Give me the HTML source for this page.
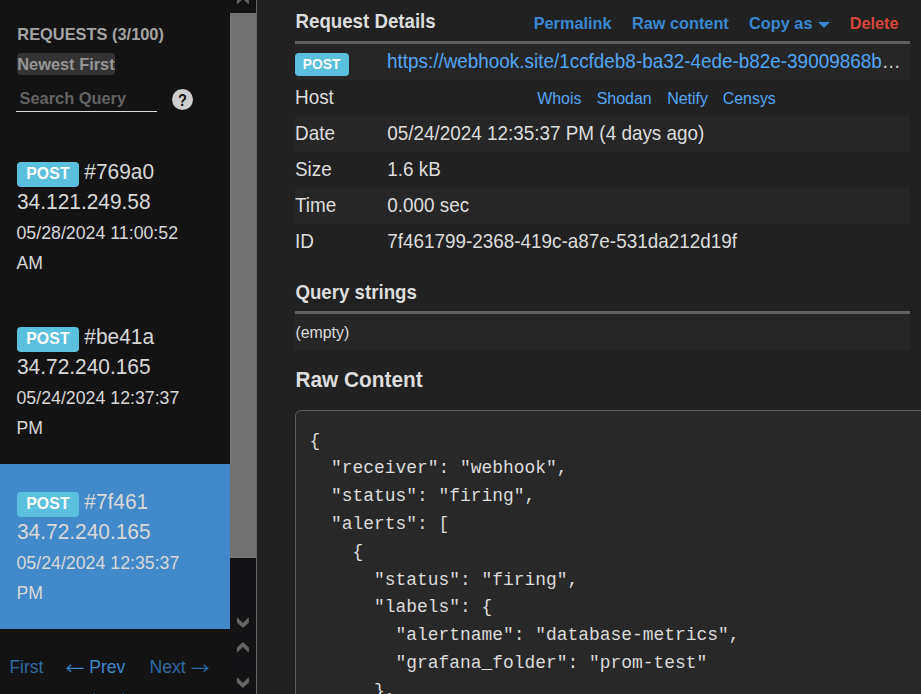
<!DOCTYPE html>
<html><head><meta charset="utf-8"><style>
html,body{margin:0;padding:0;width:921px;height:694px;overflow:hidden;background:#212121;}
.t{position:absolute;white-space:nowrap;font-family:"Liberation Sans", sans-serif;}
.r{position:absolute;}
</style></head><body>
<div class="r" style="left:0px;top:0px;width:230px;height:694px;background:#131313;"></div>
<div class="t" style="left:17.30px;top:25.21px;font-size:16.4px;line-height:16.4px;color:#a4a4a4;font-weight:bold;transform:scaleY(1.06);transform-origin:0 2.14px;">REQUESTS (3/100)</div>
<div class="r" style="left:17px;top:53px;width:98px;height:22px;background:#333333;border-radius:4px;"></div>
<div class="t" style="left:17.20px;top:54.81px;font-size:16.4px;line-height:16.4px;color:#959595;font-weight:bold;transform:scaleY(1.06);transform-origin:0 2.14px;">Newest First</div>
<div class="t" style="left:19.50px;top:88.81px;font-size:16.4px;line-height:16.4px;color:#636363;font-weight:bold;transform:scaleY(1.06);transform-origin:0 2.14px;">Search Query</div>
<div class="r" style="left:16px;top:110.7px;width:141px;height:1.4px;background:#dddddd;"></div>
<div class="r" style="left:171.7px;top:88.6px;width:21.4px;height:21.4px;background:#cdcdcd;border-radius:50%;"></div>
<div class="t" style="left:177.90px;top:92.54px;font-size:14.6px;line-height:14.6px;color:#111111;font-weight:bold;transform:scaleY(1.1);transform-origin:0 1.91px;">?</div>
<div class="r" style="left:17px;top:162px;width:62px;height:25px;background:#5bc0de;border-radius:4px;"></div>
<div class="t" style="left:26.20px;top:165.12px;font-size:15.8px;line-height:15.8px;color:#ffffff;font-weight:bold;transform:scaleY(1.06);transform-origin:0 2.07px;letter-spacing:0.15px;">POST</div>
<div class="t" style="left:84.30px;top:161.00px;font-size:20.9px;line-height:20.9px;color:#d8d8d8;font-weight:normal;transform:scaleY(1.06);transform-origin:0 2.73px;">#769a0</div>
<div class="t" style="left:17.00px;top:191.20px;font-size:20.9px;line-height:20.9px;color:#d8d8d8;font-weight:normal;transform:scaleY(1.06);transform-origin:0 2.73px;">34.121.249.58</div>
<div class="t" style="left:16.50px;top:224.47px;font-size:17.75px;line-height:17.75px;color:#d8d8d8;font-weight:normal;transform:scaleY(1.06);transform-origin:0 2.32px;">05/28/2024 11:00:52</div>
<div class="t" style="left:16.50px;top:254.20px;font-size:17.6px;line-height:17.6px;color:#d8d8d8;font-weight:normal;transform:scaleY(1.06);transform-origin:0 2.30px;">AM</div>
<div class="r" style="left:17px;top:327px;width:62px;height:25px;background:#5bc0de;border-radius:4px;"></div>
<div class="t" style="left:26.20px;top:330.12px;font-size:15.8px;line-height:15.8px;color:#ffffff;font-weight:bold;transform:scaleY(1.06);transform-origin:0 2.07px;letter-spacing:0.15px;">POST</div>
<div class="t" style="left:84.30px;top:326.00px;font-size:20.9px;line-height:20.9px;color:#d8d8d8;font-weight:normal;transform:scaleY(1.06);transform-origin:0 2.73px;">#be41a</div>
<div class="t" style="left:17.00px;top:356.20px;font-size:20.9px;line-height:20.9px;color:#d8d8d8;font-weight:normal;transform:scaleY(1.06);transform-origin:0 2.73px;">34.72.240.165</div>
<div class="t" style="left:16.50px;top:389.47px;font-size:17.75px;line-height:17.75px;color:#d8d8d8;font-weight:normal;transform:scaleY(1.06);transform-origin:0 2.32px;">05/24/2024 12:37:37</div>
<div class="t" style="left:16.50px;top:419.20px;font-size:17.6px;line-height:17.6px;color:#d8d8d8;font-weight:normal;transform:scaleY(1.06);transform-origin:0 2.30px;">PM</div>
<div class="r" style="left:0px;top:464px;width:230px;height:165px;background:#4189c8;"></div>
<div class="r" style="left:17px;top:492px;width:62px;height:25px;background:#5bc0de;border-radius:4px;"></div>
<div class="t" style="left:26.20px;top:495.12px;font-size:15.8px;line-height:15.8px;color:#ffffff;font-weight:bold;transform:scaleY(1.06);transform-origin:0 2.07px;letter-spacing:0.15px;">POST</div>
<div class="t" style="left:84.30px;top:491.00px;font-size:20.9px;line-height:20.9px;color:#d8d8d8;font-weight:normal;transform:scaleY(1.06);transform-origin:0 2.73px;">#7f461</div>
<div class="t" style="left:17.00px;top:521.20px;font-size:20.9px;line-height:20.9px;color:#d8d8d8;font-weight:normal;transform:scaleY(1.06);transform-origin:0 2.73px;">34.72.240.165</div>
<div class="t" style="left:16.50px;top:554.47px;font-size:17.75px;line-height:17.75px;color:#d8d8d8;font-weight:normal;transform:scaleY(1.06);transform-origin:0 2.32px;">05/24/2024 12:35:37</div>
<div class="t" style="left:16.50px;top:584.20px;font-size:17.6px;line-height:17.6px;color:#d8d8d8;font-weight:normal;transform:scaleY(1.06);transform-origin:0 2.30px;">PM</div>
<div class="t" style="left:9.40px;top:658.28px;font-size:17.5px;line-height:17.5px;color:#2d6ba3;font-weight:normal;transform:scaleY(1.06);transform-origin:0 2.29px;">First</div>
<div class="t" style="left:89.20px;top:658.20px;font-size:17.6px;line-height:17.6px;color:#3a86c6;font-weight:normal;transform:scaleY(1.06);transform-origin:0 2.30px;">Prev</div>
<div class="r" style="left:93px;top:693px;width:2px;height:1px;background:rgba(45,107,163,0.6);"></div>
<div class="r" style="left:122px;top:693px;width:2px;height:1px;background:rgba(45,107,163,0.6);"></div>
<div class="t" style="left:149.50px;top:658.20px;font-size:17.6px;line-height:17.6px;color:#2d6ba3;font-weight:normal;transform:scaleY(1.06);transform-origin:0 2.30px;">Next</div>
<div class="r" style="left:230px;top:0px;width:26px;height:630px;background:#131315;"></div>
<div class="r" style="left:230px;top:13px;width:26px;height:545px;background:#737373;"></div>
<div class="r" style="left:230px;top:630px;width:26px;height:64px;background:#131315;"></div>
<div class="r" style="left:256px;top:0px;width:1.2px;height:694px;background:#666666;"></div>
<div class="r" style="left:257px;top:0px;width:664px;height:694px;background:#212121;"></div>
<div class="t" style="left:295.50px;top:11.77px;font-size:18.7px;line-height:18.7px;color:#dddddd;font-weight:bold;transform:scaleY(1.06);transform-origin:0 2.44px;">Request Details</div>
<div class="t" style="left:533.70px;top:14.20px;font-size:16.3px;line-height:16.3px;color:#3a88d0;font-weight:bold;transform:scaleY(1.06);transform-origin:0 2.13px;">Permalink</div>
<div class="t" style="left:632.00px;top:14.20px;font-size:16.3px;line-height:16.3px;color:#3a88d0;font-weight:bold;transform:scaleY(1.06);transform-origin:0 2.13px;">Raw content</div>
<div class="t" style="left:749.10px;top:14.20px;font-size:16.3px;line-height:16.3px;color:#3a88d0;font-weight:bold;transform:scaleY(1.06);transform-origin:0 2.13px;">Copy as</div>
<svg class="r" style="left:818px;top:22px" width="12" height="7"><path d="M0,0 L12,0 L6,6 Z" fill="#3a88d0"/></svg>
<div class="t" style="left:849.70px;top:14.20px;font-size:16.3px;line-height:16.3px;color:#d9463e;font-weight:bold;transform:scaleY(1.06);transform-origin:0 2.13px;">Delete</div>
<div class="r" style="left:295px;top:41px;width:615px;height:3px;background:#606060;"></div>
<div class="r" style="left:295px;top:44px;width:615px;height:36px;background:#262626;"></div>
<div class="r" style="left:295px;top:116px;width:615px;height:36px;background:#262626;"></div>
<div class="r" style="left:295px;top:188px;width:615px;height:36px;background:#262626;"></div>
<div class="r" style="left:295px;top:53px;width:54px;height:23px;background:#5bc0de;border-radius:4px;"></div>
<div class="t" style="left:302.80px;top:57.12px;font-size:13.8px;line-height:13.8px;color:#ffffff;font-weight:bold;transform:scaleY(1.06);transform-origin:0 1.80px;">POST</div>
<div class="t" style="left:387.00px;top:51.60px;font-size:18.9px;line-height:18.9px;color:#d0d0d0;font-weight:normal;transform:scaleY(1.06);transform-origin:0 2.47px;"><span style="color:#52a6f6">https://webhook.site/1ccfdeb8-ba32-4ede-b82e-39009868b</span>&hellip;</div>
<div class="t" style="left:295.00px;top:88.00px;font-size:18.9px;line-height:18.9px;color:#dddddd;font-weight:normal;transform:scaleY(1.06);transform-origin:0 2.47px;">Host</div>
<div class="t" style="left:295.00px;top:124.00px;font-size:18.9px;line-height:18.9px;color:#dddddd;font-weight:normal;transform:scaleY(1.06);transform-origin:0 2.47px;">Date</div>
<div class="t" style="left:295.00px;top:160.00px;font-size:18.9px;line-height:18.9px;color:#dddddd;font-weight:normal;transform:scaleY(1.06);transform-origin:0 2.47px;">Size</div>
<div class="t" style="left:295.00px;top:196.00px;font-size:18.9px;line-height:18.9px;color:#dddddd;font-weight:normal;transform:scaleY(1.06);transform-origin:0 2.47px;">Time</div>
<div class="t" style="left:295.00px;top:232.00px;font-size:18.9px;line-height:18.9px;color:#dddddd;font-weight:normal;transform:scaleY(1.06);transform-origin:0 2.47px;">ID</div>
<div class="t" style="left:537.20px;top:89.90px;font-size:15.95px;line-height:15.95px;color:#52a6f6;font-weight:normal;transform:scaleY(1.06);transform-origin:0 2.08px;">Whois</div>
<div class="t" style="left:596.70px;top:89.90px;font-size:15.95px;line-height:15.95px;color:#52a6f6;font-weight:normal;transform:scaleY(1.06);transform-origin:0 2.08px;">Shodan</div>
<div class="t" style="left:667.20px;top:89.90px;font-size:15.95px;line-height:15.95px;color:#52a6f6;font-weight:normal;transform:scaleY(1.06);transform-origin:0 2.08px;">Netify</div>
<div class="t" style="left:722.70px;top:89.90px;font-size:15.95px;line-height:15.95px;color:#52a6f6;font-weight:normal;transform:scaleY(1.06);transform-origin:0 2.08px;">Censys</div>
<div class="t" style="left:387.20px;top:124.00px;font-size:18.9px;line-height:18.9px;color:#dddddd;font-weight:normal;transform:scaleY(1.06);transform-origin:0 2.47px;">05/24/2024 12:35:37 PM (4 days ago)</div>
<div class="t" style="left:387.20px;top:160.00px;font-size:18.9px;line-height:18.9px;color:#dddddd;font-weight:normal;transform:scaleY(1.06);transform-origin:0 2.47px;">1.6 kB</div>
<div class="t" style="left:387.20px;top:196.00px;font-size:18.9px;line-height:18.9px;color:#dddddd;font-weight:normal;transform:scaleY(1.06);transform-origin:0 2.47px;">0.000 sec</div>
<div class="t" style="left:387.20px;top:232.00px;font-size:18.9px;line-height:18.9px;color:#dddddd;font-weight:normal;transform:scaleY(1.06);transform-origin:0 2.47px;">7f461799-2368-419c-a87e-531da212d19f</div>
<div class="t" style="left:295.40px;top:283.37px;font-size:18.7px;line-height:18.7px;color:#dddddd;font-weight:bold;transform:scaleY(1.06);transform-origin:0 2.44px;">Query strings</div>
<div class="r" style="left:295px;top:311px;width:615px;height:3px;background:#606060;"></div>
<div class="r" style="left:295px;top:314px;width:615px;height:36px;background:#262626;"></div>
<div class="t" style="left:295.40px;top:324.04px;font-size:15.9px;line-height:15.9px;color:#dddddd;font-weight:normal;transform:scaleY(1.06);transform-origin:0 2.08px;">(empty)</div>
<div class="t" style="left:295.40px;top:369.15px;font-size:20.85px;line-height:20.85px;color:#dddddd;font-weight:bold;transform:scaleY(1.06);transform-origin:0 2.73px;">Raw Content</div>
<div class="r" style="left:295px;top:410px;width:700px;height:400px;background:#282828;border:1px solid #5c5c5c;border-radius:6px;box-sizing:border-box;"></div>
<div class="t" style="left:309.60px;top:431.67px;font-size:17.92px;line-height:17.92px;color:#dcdcdc;font-weight:normal;font-family:'Liberation Mono', monospace;transform:scaleY(1.07);transform-origin:0 0.90px;white-space:pre;">{</div>
<div class="t" style="left:309.60px;top:459.47px;font-size:17.92px;line-height:17.92px;color:#dcdcdc;font-weight:normal;font-family:'Liberation Mono', monospace;transform:scaleY(1.07);transform-origin:0 0.90px;white-space:pre;">&nbsp;&nbsp;"receiver":&nbsp;"webhook",</div>
<div class="t" style="left:309.60px;top:487.27px;font-size:17.92px;line-height:17.92px;color:#dcdcdc;font-weight:normal;font-family:'Liberation Mono', monospace;transform:scaleY(1.07);transform-origin:0 0.90px;white-space:pre;">&nbsp;&nbsp;"status":&nbsp;"firing",</div>
<div class="t" style="left:309.60px;top:515.07px;font-size:17.92px;line-height:17.92px;color:#dcdcdc;font-weight:normal;font-family:'Liberation Mono', monospace;transform:scaleY(1.07);transform-origin:0 0.90px;white-space:pre;">&nbsp;&nbsp;"alerts":&nbsp;[</div>
<div class="t" style="left:309.60px;top:542.87px;font-size:17.92px;line-height:17.92px;color:#dcdcdc;font-weight:normal;font-family:'Liberation Mono', monospace;transform:scaleY(1.07);transform-origin:0 0.90px;white-space:pre;">&nbsp;&nbsp;&nbsp;&nbsp;{</div>
<div class="t" style="left:309.60px;top:570.67px;font-size:17.92px;line-height:17.92px;color:#dcdcdc;font-weight:normal;font-family:'Liberation Mono', monospace;transform:scaleY(1.07);transform-origin:0 0.90px;white-space:pre;">&nbsp;&nbsp;&nbsp;&nbsp;&nbsp;&nbsp;"status":&nbsp;"firing",</div>
<div class="t" style="left:309.60px;top:598.47px;font-size:17.92px;line-height:17.92px;color:#dcdcdc;font-weight:normal;font-family:'Liberation Mono', monospace;transform:scaleY(1.07);transform-origin:0 0.90px;white-space:pre;">&nbsp;&nbsp;&nbsp;&nbsp;&nbsp;&nbsp;"labels":&nbsp;{</div>
<div class="t" style="left:309.60px;top:626.27px;font-size:17.92px;line-height:17.92px;color:#dcdcdc;font-weight:normal;font-family:'Liberation Mono', monospace;transform:scaleY(1.07);transform-origin:0 0.90px;white-space:pre;">&nbsp;&nbsp;&nbsp;&nbsp;&nbsp;&nbsp;&nbsp;&nbsp;"alertname":&nbsp;"database-metrics",</div>
<div class="t" style="left:309.60px;top:654.07px;font-size:17.92px;line-height:17.92px;color:#dcdcdc;font-weight:normal;font-family:'Liberation Mono', monospace;transform:scaleY(1.07);transform-origin:0 0.90px;white-space:pre;">&nbsp;&nbsp;&nbsp;&nbsp;&nbsp;&nbsp;&nbsp;&nbsp;"grafana_folder":&nbsp;"prom-test"</div>
<div class="t" style="left:309.60px;top:681.87px;font-size:17.92px;line-height:17.92px;color:#dcdcdc;font-weight:normal;font-family:'Liberation Mono', monospace;transform:scaleY(1.07);transform-origin:0 0.90px;white-space:pre;">&nbsp;&nbsp;&nbsp;&nbsp;&nbsp;&nbsp;},</div>
<div class="t" style="left:309.60px;top:709.67px;font-size:17.92px;line-height:17.92px;color:#dcdcdc;font-weight:normal;font-family:'Liberation Mono', monospace;transform:scaleY(1.07);transform-origin:0 0.90px;white-space:pre;">&nbsp;&nbsp;&nbsp;&nbsp;&nbsp;&nbsp;"annotations":&nbsp;{</div>

<svg class="r" style="left:0;top:0" width="921" height="694"><path d="M236.90,4.10 L237.60,4.10 L242.90,-1.00 L248.20,4.10 L248.90,4.10 L248.90,-0.70 L242.90,-6.10 L236.90,-0.70 Z" fill="#656565"/><path d="M236.90,617.80 L237.60,617.80 L242.90,622.90 L248.20,617.80 L248.90,617.80 L248.90,622.60 L242.90,628.00 L236.90,622.60 Z" fill="#656565"/><path d="M236.90,652.20 L237.60,652.20 L242.90,647.10 L248.20,652.20 L248.90,652.20 L248.90,647.40 L242.90,642.00 L236.90,647.40 Z" fill="#656565"/><path d="M236.90,677.80 L237.60,677.80 L242.90,682.90 L248.20,677.80 L248.90,677.80 L248.90,682.60 L242.90,688.00 L236.90,682.60 Z" fill="#656565"/><path d="M67,668.3 L83.6,668.3 M71.2,664.8 L67,668.3 L71.2,671.8" stroke="#3a86c6" stroke-width="1.3" fill="none"/><path d="M191.6,668.3 L207.8,668.3 M203.6,664.8 L207.8,668.3 L203.6,671.8" stroke="#2d6ba3" stroke-width="1.3" fill="none"/></svg>
</body></html>
